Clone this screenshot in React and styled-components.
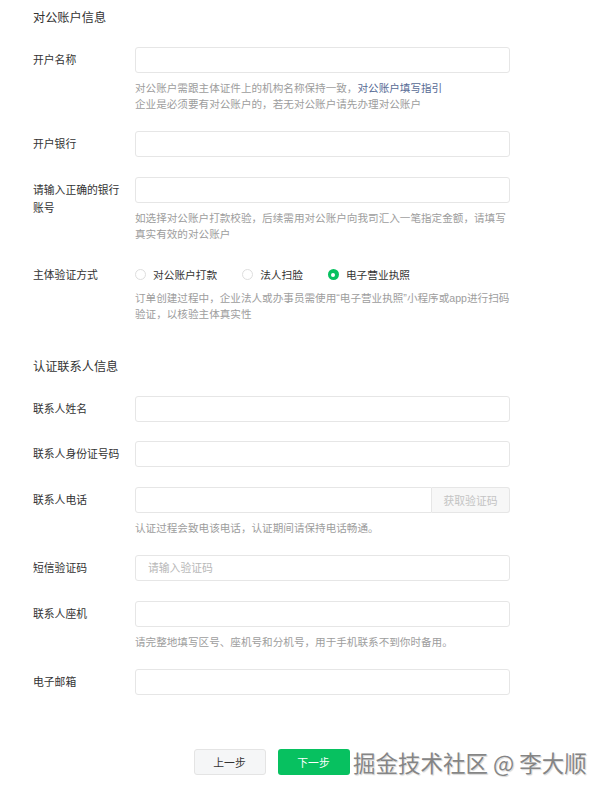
import React, { useState } from "react";
import styled, { createGlobalStyle } from "styled-components";

const GlobalStyle = createGlobalStyle`
  html, body {
    margin: 0;
    padding: 0;
    background: #ffffff;
  }
  body {
    font-family: "Liberation Sans", "Noto Sans CJK SC", "Noto Sans", sans-serif;
    color: #333333;
  }
  * {
    box-sizing: border-box;
  }
`;

const Page = styled.div`
  position: relative;
  width: 606px;
  height: 794px;
  padding: 10px 0 0 33px;
`;

const Form = styled.div`
  width: 477px;
`;

const SectionTitle = styled.div`
  font-size: 12.2px;
  line-height: 16px;
  color: #333333;
  margin-top: ${({ $first }) => ($first ? "0" : "36.5px")};
  margin-bottom: ${({ $first }) => ($first ? "20.5px" : "21.5px")};
`;

const Row = styled.div`
  display: flex;
  align-items: flex-start;
  margin-bottom: 19.3px;
`;

const Label = styled.div`
  width: 102px;
  flex: none;
  padding: 4px 12px 0 0;
  font-size: 10.8px;
  line-height: 18px;
  color: #333333;
`;

const Field = styled.div`
  flex: 1;
  min-width: 0;
`;

const Input = styled.input`
  display: block;
  width: 100%;
  height: 26px;
  padding: 0 12px;
  border: 1px solid #e6e6e6;
  border-radius: ${({ $joined }) => ($joined ? "3px 0 0 3px" : "3px")};
  background: #ffffff;
  font-family: inherit;
  font-size: 10.8px;
  color: #333333;
  outline: none;

  &::placeholder {
    color: #b8b8b8;
  }
`;

const InputGroup = styled.div`
  display: flex;
`;

const CodeButton = styled.button`
  flex: none;
  width: 78px;
  height: 26px;
  border: 1px solid #e6e6e6;
  border-left: none;
  border-radius: 0 3px 3px 0;
  background: #f7f7f7;
  color: #c4c4c4;
  font-family: inherit;
  font-size: 10.8px;
  padding: 0;
  cursor: not-allowed;
`;

const Help = styled.div`
  margin-top: ${({ $tight }) => ($tight ? "2px" : "7px")};
  font-size: 10.6px;
  line-height: 16.3px;
  color: #9d9d9d;
`;

const HelpLink = styled.a`
  color: #576b95;
  text-decoration: none;
`;

const RadioGroup = styled.div`
  display: flex;
  align-items: center;
  height: 26px;
`;

const RadioItem = styled.label`
  display: flex;
  align-items: center;
  margin-right: 25px;
  font-size: 10.7px;
  color: #333333;
  cursor: pointer;
`;

const RadioDot = styled.span`
  width: 11px;
  height: 11px;
  border-radius: 50%;
  margin: 0 7px 0 0;
  flex: none;
  border: ${({ $checked }) => ($checked ? "none" : "1px solid #dedede")};
  background: ${({ $checked }) => ($checked ? "#07c160" : "#ffffff")};
  display: flex;
  align-items: center;
  justify-content: center;

  &::after {
    content: "";
    display: ${({ $checked }) => ($checked ? "block" : "none")};
    width: 4px;
    height: 4px;
    border-radius: 50%;
    background: #ffffff;
  }
`;

const Actions = styled.div`
  display: flex;
  justify-content: center;
  gap: 12px;
  margin-top: 54px;
`;

const StepButton = styled.button`
  width: 72px;
  height: 26px;
  border-radius: 3px;
  padding: 0;
  font-family: inherit;
  font-size: 10.8px;
  cursor: pointer;
  border: ${({ $primary }) => ($primary ? "none" : "1px solid #e4e4e4")};
  background: ${({ $primary }) => ($primary ? "#07c160" : "#f5f6f7")};
  color: ${({ $primary }) => ($primary ? "#ffffff" : "#333333")};
`;

const Watermark = styled.div`
  position: absolute;
  left: 353px;
  top: 747px;
  font-family: "Noto Sans CJK SC", sans-serif;
  font-size: 22.5px;
  line-height: 30px;
  color: #858585;
  white-space: nowrap;
  text-shadow: 0 0 1px #ffffff, 1px 1px 1px rgba(0, 0, 0, 0.18);
  pointer-events: none;
`;

const methods = ["对公账户打款", "法人扫脸", "电子营业执照"];

const App = () => {
  const [method, setMethod] = useState(2);

  return (
    <>
      <GlobalStyle />
      <Page>
        <Form>
          <SectionTitle $first>对公账户信息</SectionTitle>

          <Row>
            <Label>开户名称</Label>
            <Field>
              <Input />
              <Help>
                对公账户需跟主体证件上的机构名称保持一致，
                <HelpLink href="#">对公账户填写指引</HelpLink>
                <br />
                企业是必须要有对公账户的，若无对公账户请先办理对公账户
              </Help>
            </Field>
          </Row>

          <Row>
            <Label>开户银行</Label>
            <Field>
              <Input />
            </Field>
          </Row>

          <Row>
            <Label>请输入正确的银行账号</Label>
            <Field>
              <Input />
              <Help>
                如选择对公账户打款校验，后续需用对公账户向我司汇入一笔指定金额，请填写真实有效的对公账户
              </Help>
            </Field>
          </Row>

          <Row>
            <Label>主体验证方式</Label>
            <Field>
              <RadioGroup>
                {methods.map((m, i) => (
                  <RadioItem key={m} onClick={() => setMethod(i)}>
                    <RadioDot $checked={method === i} />
                    {m}
                  </RadioItem>
                ))}
              </RadioGroup>
              <Help $tight>
                订单创建过程中，企业法人或办事员需使用“电子营业执照”小程序或app进行扫码验证，以核验主体真实性
              </Help>
            </Field>
          </Row>

          <SectionTitle>认证联系人信息</SectionTitle>

          <Row>
            <Label>联系人姓名</Label>
            <Field>
              <Input />
            </Field>
          </Row>

          <Row>
            <Label>联系人身份证号码</Label>
            <Field>
              <Input />
            </Field>
          </Row>

          <Row>
            <Label>联系人电话</Label>
            <Field>
              <InputGroup>
                <Input $joined />
                <CodeButton disabled>获取验证码</CodeButton>
              </InputGroup>
              <Help>认证过程会致电该电话，认证期间请保持电话畅通。</Help>
            </Field>
          </Row>

          <Row>
            <Label>短信验证码</Label>
            <Field>
              <Input placeholder="请输入验证码" />
            </Field>
          </Row>

          <Row>
            <Label>联系人座机</Label>
            <Field>
              <Input />
              <Help>请完整地填写区号、座机号和分机号，用于手机联系不到你时备用。</Help>
            </Field>
          </Row>

          <Row>
            <Label>电子邮箱</Label>
            <Field>
              <Input />
            </Field>
          </Row>

          <Actions>
            <StepButton>上一步</StepButton>
            <StepButton $primary>下一步</StepButton>
          </Actions>
        </Form>
        <Watermark>掘金技术社区 @ 李大顺</Watermark>
      </Page>
    </>
  );
};

export default App;
